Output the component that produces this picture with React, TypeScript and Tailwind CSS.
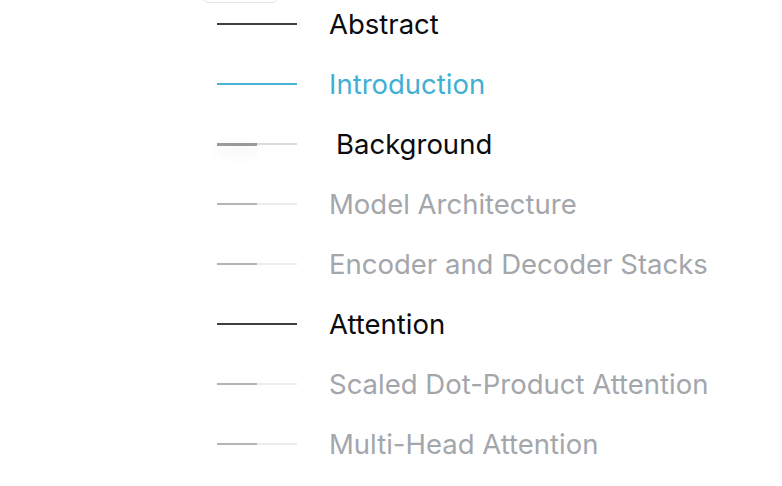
import React from 'react';

type Item = { label: string; state: 'read' | 'active' | 'hover' | 'unread' };

const items: Item[] = [
  { label: 'Abstract', state: 'read' },
  { label: 'Introduction', state: 'active' },
  { label: 'Background', state: 'hover' },
  { label: 'Model Architecture', state: 'unread' },
  { label: 'Encoder and Decoder Stacks', state: 'unread' },
  { label: 'Attention', state: 'read' },
  { label: 'Scaled Dot-Product Attention', state: 'unread' },
  { label: 'Multi-Head Attention', state: 'unread' },
];

const Bar = ({ state }: { state: Item['state'] }) => {
  if (state === 'read') return <div className="w-[80px] h-[2px] bg-[#3f3f42]" />;
  if (state === 'active') return <div className="w-[80px] h-[2px] bg-[#4ab3d3]" />;
  if (state === 'hover')
    return (
      <div className="flex items-center w-[80px]">
        <div className="w-[40px] h-[3px] bg-[#9a9a9a] shadow-[0_6px_14px_rgba(0,0,0,0.12)]" />
        <div className="w-[40px] h-[2px] bg-[#dcdcdc]" />
      </div>
    );
  return (
    <div className="flex items-center w-[80px]">
      <div className="w-[40px] h-[2px] bg-[#b4b4b4]" />
      <div className="w-[40px] h-[2px] bg-[#ececec]" />
    </div>
  );
};

const textColor = {
  read: 'text-[#0b0b0f]',
  active: 'text-[#3fb0d4]',
  hover: 'text-[#0b0b0f] pl-[7px]',
  unread: 'text-[#a3a6ab]',
};

export default function App() {
  return (
    <div className="w-[782px] h-[486px] bg-white relative overflow-hidden font-['Inter',sans-serif]">
      <div className="absolute left-[203px] top-[-20px] w-[75px] h-[23px] border border-[#e4e4e4] rounded-b-[6px]" />
      <ul className="pl-[217px] -mt-[6px]">
        {items.map((it) => (
          <li key={it.label} className="h-[60px] flex items-center gap-[32px]">
            <Bar state={it.state} />
            <span className={`text-[27.5px] leading-none translate-y-[1px] ${textColor[it.state]}`}>{it.label}</span>
          </li>
        ))}
      </ul>
    </div>
  );
}
